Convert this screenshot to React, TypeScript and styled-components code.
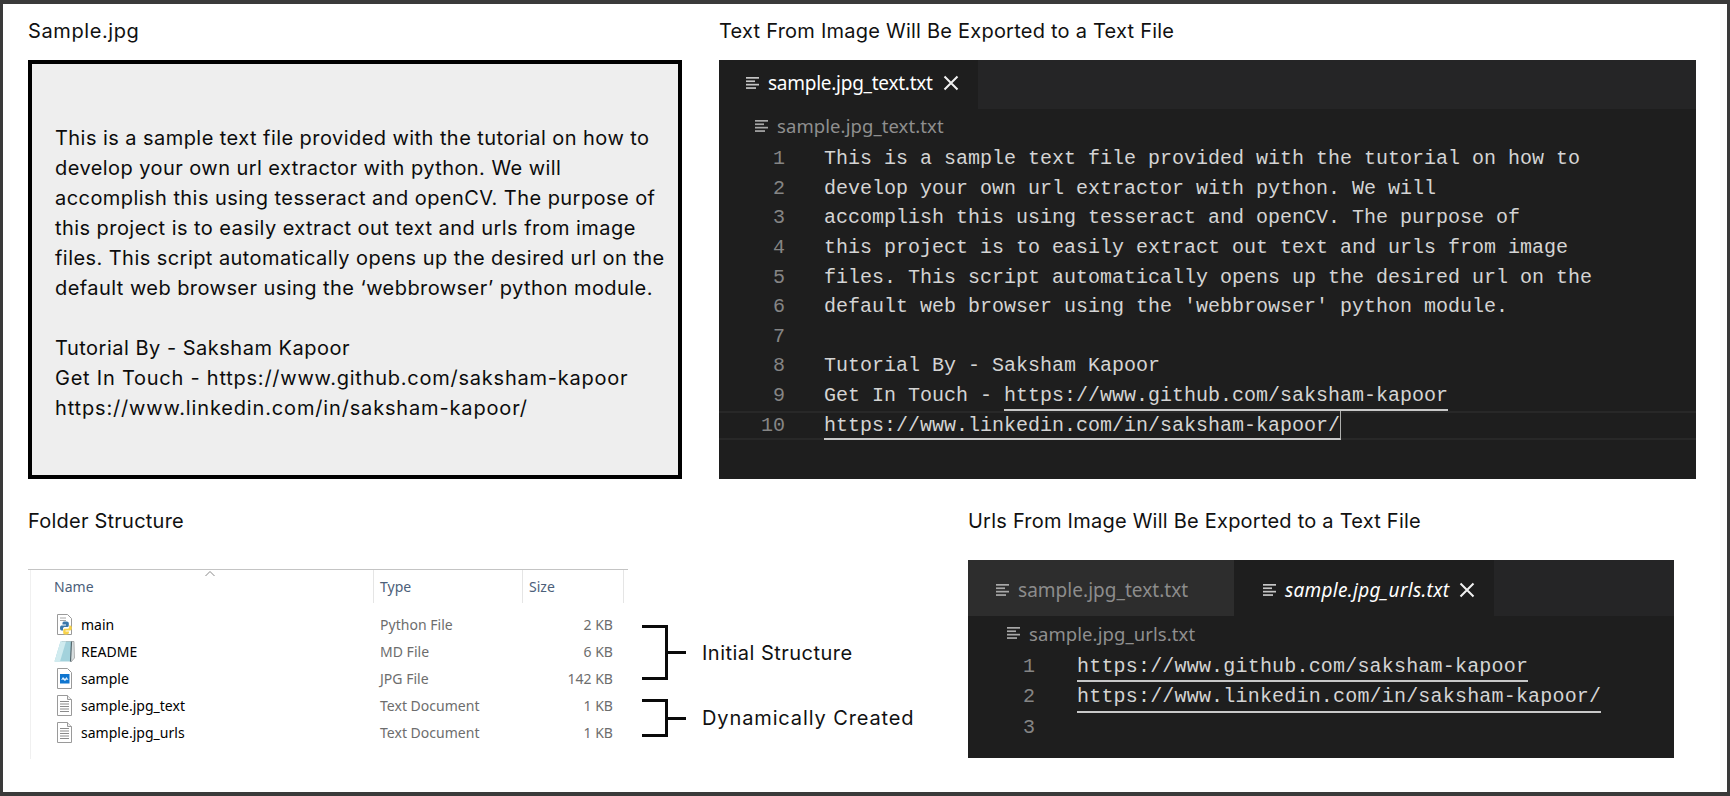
import React from "react";
import styled, { createGlobalStyle } from "styled-components";

const Global = createGlobalStyle`
  html, body { margin: 0; padding: 0; background: #fff; }
  * { box-sizing: border-box; }
`;

const Frame = styled.div`
  width: 1730px;
  height: 796px;
  border: solid #3a3a3a;
  border-width: 4px 3px;
  padding-left: 25px;
  background: #fff;
  font-family: Inter, "Liberation Sans", sans-serif;
  color: #111;
  overflow: hidden;
`;
const Row = styled.div<{ $top: number }>`
  display: flex;
  margin-top: ${(p) => p.$top}px;
`;
const Section = styled.section<{ $w: number; $left?: number }>`
  width: ${(p) => p.$w}px;
  margin-left: ${(p) => p.$left ?? 0}px;
  flex: none;
`;
const Title = styled.h2<{ $gap: number; $sp?: number }>`
  margin: 0 0 ${(p) => p.$gap}px;
  height: 26px;
  font-size: 20px;
  line-height: 26px;
  font-weight: 400;
  letter-spacing: ${(p) => p.$sp ?? 0.23}px;
  white-space: nowrap;
`;
const SampleBox = styled.div`
  height: 419px;
  border: 4px solid #000;
  background: #eeeeee;
  padding: 59px 0 0 23px;
  font-size: 20px;
  line-height: 30px;
  color: #0c0c0c;
  white-space: nowrap;
`;
const TextLine = styled.div<{ $sp: number }>`
  height: 30px;
  letter-spacing: ${(p) => p.$sp}px;
`;

/* editor */
const Editor = styled.div<{ $h: number }>`
  height: ${(p) => p.$h}px;
  background: #1e1e1e;
  color: #d4d4d4;
  overflow: hidden;
`;
const TabBar = styled.div<{ $h: number }>`
  display: flex;
  height: ${(p) => p.$h}px;
  background: #252526;
`;
const Tab = styled.div<{ $w: number; $pl: number; $sp: number; $nudge: number; $active?: boolean; $italic?: boolean }>`
  display: flex;
  align-items: center;
  width: ${(p) => p.$w}px;
  padding-left: ${(p) => p.$pl}px;
  padding-top: ${(p) => Math.max(p.$nudge, 0)}px;
  padding-bottom: ${(p) => Math.max(-p.$nudge, 0)}px;
  background: ${(p) => (p.$active ? "#1e1e1e" : "#2d2d2d")};
  color: ${(p) => (p.$active ? "#ffffff" : "#8c8c8c")};
  font-family: "Noto Sans", "Open Sans", sans-serif;
  font-style: ${(p) => (p.$italic ? "italic" : "normal")};
  font-size: 19px;
  letter-spacing: ${(p) => p.$sp}px;
`;
const TabName = styled.span`
  margin-left: 7px;
  white-space: nowrap;
`;
const Crumb = styled.div<{ $h: number; $pl: number }>`
  display: flex;
  align-items: center;
  height: ${(p) => p.$h}px;
  padding-left: ${(p) => p.$pl}px;
  padding-bottom: 2px;
  color: #8f8f8f;
  font-family: "Noto Sans", "Open Sans", sans-serif;
  font-size: 18.5px;
  letter-spacing: 0.08px;
`;
const CodeLine = styled.div<{ $lh: number; $active?: boolean }>`
  display: flex;
  height: ${(p) => p.$lh}px;
  line-height: ${(p) => p.$lh}px;
  font-family: "Liberation Mono", "DejaVu Sans Mono", monospace;
  font-size: 20px;
  white-space: pre;
  ${(p) => (p.$active ? "box-shadow: inset 0 2px #282828, inset 0 -2px #282828;" : "")}
`;
const Gutter = styled.span<{ $w: number; $mr: number }>`
  flex: none;
  width: ${(p) => p.$w}px;
  margin-right: ${(p) => p.$mr}px;
  text-align: right;
  color: #858585;
`;
const Code = styled.span<{ $sp?: number }>`
  letter-spacing: ${(p) => p.$sp ?? 0}px;
`;
const Link = styled.span<{ $cursor?: boolean }>`
  display: inline-block;
  height: 100%;
  border-bottom: 2px solid #c8c8c8;
  ${(p) => (p.$cursor ? "border-right: 1px solid #aeafad;" : "")}
`;

/* explorer */
const Explorer = styled.div`
  width: 600px;
  height: 190px;
  flex: none;
  border-top: 1.5px solid #c4c4c4;
  position: relative;
  font-family: "Noto Sans", "Open Sans", sans-serif;
  font-size: 14px;
  letter-spacing: 0.02px;
`;
const ExplorerInner = styled.div`
  margin-left: 2px;
  height: 100%;
  border-left: 1px solid #f0f0f0;
`;
const Caret = styled.svg`
  position: absolute;
  left: 176px;
  top: 0;
`;
const Head = styled.div`
  display: grid;
  grid-template-columns: 343px 149px 101px;
  height: 32px;
  color: #4c607a;
  line-height: 33px;
`;
const HeadCell = styled.div<{ $pl: number }>`
  padding-left: ${(p) => p.$pl}px;
  border-right: 1px solid #e5e5e5;
`;
const FileList = styled.div`
  padding-top: 9px;
`;
const FileRow = styled.div`
  display: grid;
  grid-template-columns: 343px 149px 90px;
  align-items: center;
  height: 27px;
`;
const NameCell = styled.div`
  display: flex;
  align-items: center;
  padding-left: 23px;
  color: #000;
`;
const FileName = styled.span`
  margin-left: 5px;
`;
const IconBox = styled.span`
  display: flex;
  justify-content: center;
  width: 22px;
`;
const TypeCell = styled.div`
  padding-left: 6px;
  color: #6d6d6d;
`;
const SizeCell = styled.div`
  text-align: right;
  color: #6d6d6d;
`;

const Groups = styled.div`
  margin: 56px 0 0 14px;
  display: flex;
  flex-direction: column;
  gap: 19px;
`;
const Group = styled.div`
  display: flex;
  align-items: center;
`;
const Bracket = styled.div<{ $h: number }>`
  width: 26px;
  height: ${(p) => p.$h}px;
  border: 3px solid #0a0a0a;
  border-left: 0;
`;
const Tick = styled.div`
  width: 18px;
  height: 3px;
  background: #0a0a0a;
`;
const GroupLabel = styled.span<{ $sp: number }>`
  margin-left: 16px;
  font-size: 20px;
  letter-spacing: ${(p) => p.$sp}px;
  white-space: nowrap;
`;

const ListIcon = ({ c = "#c5c5c5" }: { c?: string }) => (
  <svg width="16" height="16" viewBox="0 0 16 16" fill={c}>
    <rect x="1" y="2" width="13" height="1.7" />
    <rect x="1" y="5.4" width="9" height="1.7" />
    <rect x="1" y="8.8" width="13" height="1.7" />
    <rect x="1" y="12.2" width="10" height="1.7" />
  </svg>
);
const CloseIcon = styled.svg`
  margin-left: 10px;
`;
const Close = () => (
  <CloseIcon width="16" height="16" viewBox="0 0 16 16" stroke="#f0f0f0" strokeWidth="2" fill="none">
    <path d="M1.5 1.5 L14.5 14.5 M14.5 1.5 L1.5 14.5" />
  </CloseIcon>
);

const PageBase = () => (
  <path d="M3.5 1.5 H13.5 L17.5 5.5 V21.5 H3.5 Z" fill="#fff" stroke="#9a9a9a" strokeWidth="1" />
);
const TxtIcon = () => (
  <svg width="22" height="23" viewBox="0 0 22 23">
    <PageBase />
    <path d="M13.5 1.5 V5.5 H17.5" fill="#eee" stroke="#9a9a9a" />
    <path d="M6 7.5H15M6 10H15M6 12.5H15M6 15H15M6 17.5H15" stroke="#8b8b8b" strokeWidth="1" />
  </svg>
);
const PyIcon = () => (
  <svg width="22" height="23" viewBox="0 0 22 23">
    <PageBase />
    <path d="M6 5H12M6 7.5H12" stroke="#a8a8a8" />
    <path d="M11 8.5 C8 8.5 8.5 10 8.5 11.5 H12 V12.5 H7.5 C5.5 12.5 5.5 17.5 7.5 17.5 H9 V15.5 C9 14.5 10 14 11 14 H13.5 C14.5 14 14.8 13 14.8 12 V10 C14.8 8.8 13 8.5 11 8.5 Z" fill="#3b78ab" />
    <path d="M12 21.5 C15 21.5 15 20 15 18.5 H11.5 V17.6 H16 C18.5 17.6 18.5 12.6 16 12.6 H15.2 V14.2 C15.2 15.2 14 15.8 13 15.8 H10.5 C9.5 15.8 9.2 16.8 9.2 18 V20 C9.2 21 10.5 21.5 12 21.5 Z" fill="#f7d24a" />
  </svg>
);
const NoteIcon = () => (
  <svg width="22" height="23" viewBox="0 0 22 23">
    <path d="M8 1.5 H20 L20.5 18 L17 22 Z" fill="#d9dfe0" stroke="#8a8a8a" strokeWidth="0.6" />
    <path d="M6.5 1.5 H17.5 L16.5 21.5 H0.5 Z" fill="#a3d2dc" />
    <path d="M6.5 1.5 H12 L6 21.5 H0.5 Z" fill="#d0ebef" />
    <path d="M17.5 1.5 L16.5 21.5" stroke="#55666c" strokeWidth="1.2" />
  </svg>
);
const JpgIcon = () => (
  <svg width="22" height="23" viewBox="0 0 22 23">
    <PageBase />
    <rect x="6" y="7" width="9.5" height="9.5" fill="#0f75cf" />
    <path d="M7 13 L9 10 L11 12 L12.5 10 L14.5 13 L12.5 12.5 L11 14 L9 12.5 Z" fill="#dff0ff" />
  </svg>
);

const files = [
  { name: "main", type: "Python File", size: "2 KB", icon: <PyIcon /> },
  { name: "README", type: "MD File", size: "6 KB", icon: <NoteIcon /> },
  { name: "sample", type: "JPG File", size: "142 KB", icon: <JpgIcon /> },
  { name: "sample.jpg_text", type: "Text Document", size: "1 KB", icon: <TxtIcon /> },
  { name: "sample.jpg_urls", type: "Text Document", size: "1 KB", icon: <TxtIcon /> },
];

const sampleLines = [
  { t: "This is a sample text file provided with the tutorial on how to", sp: 0.44 },
  { t: "develop your own url extractor with python. We will", sp: 0.44 },
  { t: "accomplish this using tesseract and openCV. The purpose of", sp: 0.44 },
  { t: "this project is to easily extract out text and urls from image", sp: 0.44 },
  { t: "files. This script automatically opens up the desired url on the", sp: 0.44 },
  { t: "default web browser using the \u2018webbrowser\u2019 python module.", sp: 0.44 },
  { t: "", sp: 0 },
  { t: "Tutorial By - Saksham Kapoor", sp: 0.5 },
  { t: "Get In Touch - https://www.github.com/saksham-kapoor", sp: 0.76 },
  { t: "https://www.linkedin.com/in/saksham-kapoor/", sp: 0.84 },
];

const codeLines = [
  "This is a sample text file provided with the tutorial on how to",
  "develop your own url extractor with python. We will",
  "accomplish this using tesseract and openCV. The purpose of",
  "this project is to easily extract out text and urls from image",
  "files. This script automatically opens up the desired url on the",
  "default web browser using the 'webbrowser' python module.",
  "",
  "Tutorial By - Saksham Kapoor",
];

export default function App() {
  return (
    <Frame>
      <Global />
      <Row $top={14}>
        <Section $w={654}>
          <Title $gap={16} $sp={0.6}>Sample.jpg</Title>
          <SampleBox>
            {sampleLines.map((l, i) => (
              <TextLine key={i} $sp={l.sp}>{l.t}</TextLine>
            ))}
          </SampleBox>
        </Section>
        <Section $w={977} $left={37}>
          <Title $gap={16}>Text From Image Will Be Exported to a Text File</Title>
          <Editor $h={419}>
            <TabBar $h={49}>
              <Tab $w={259} $pl={26} $sp={-0.26} $nudge={-3} $active>
                <ListIcon />
                <TabName>sample.jpg_text.txt</TabName>
                <Close />
              </Tab>
            </TabBar>
            <Crumb $h={35} $pl={35}>
              <ListIcon c="#a8a8a8" />
              <TabName>sample.jpg_text.txt</TabName>
            </Crumb>
            {codeLines.map((l, i) => (
              <CodeLine key={i} $lh={29.65}>
                <Gutter $w={66} $mr={39}>{i + 1}</Gutter>
                <Code>{l}</Code>
              </CodeLine>
            ))}
            <CodeLine $lh={29.65}>
              <Gutter $w={66} $mr={39}>9</Gutter>
              <Code>Get In Touch - <Link>https://www.github.com/saksham-kapoor</Link></Code>
            </CodeLine>
            <CodeLine $lh={29.65} $active>
              <Gutter $w={66} $mr={39}>10</Gutter>
              <Code><Link $cursor>https://www.linkedin.com/in/saksham-kapoor/</Link></Code>
            </CodeLine>
          </Editor>
        </Section>
      </Row>
      <Row $top={29}>
        <Section $w={940}>
          <Title $gap={35}>Folder Structure</Title>
          <Row $top={0}>
            <Explorer>
              <Caret width="12" height="7" viewBox="0 0 12 7" fill="none" stroke="#8a8a8a">
                <path d="M1.5 6 L6 1.5 L10.5 6" />
              </Caret>
              <ExplorerInner>
                <Head>
                  <HeadCell $pl={23}>Name</HeadCell>
                  <HeadCell $pl={6}>Type</HeadCell>
                  <HeadCell $pl={6}>Size</HeadCell>
                </Head>
                <FileList>
                  {files.map((f) => (
                    <FileRow key={f.name}>
                      <NameCell>
                        <IconBox>{f.icon}</IconBox>
                        <FileName>{f.name}</FileName>
                      </NameCell>
                      <TypeCell>{f.type}</TypeCell>
                      <SizeCell>{f.size}</SizeCell>
                    </FileRow>
                  ))}
                </FileList>
              </ExplorerInner>
            </Explorer>
            <Groups>
              <Group>
                <Bracket $h={55} />
                <Tick />
                <GroupLabel $sp={0.48}>Initial Structure</GroupLabel>
              </Group>
              <Group>
                <Bracket $h={38} />
                <Tick />
                <GroupLabel $sp={0.88}>Dynamically Created</GroupLabel>
              </Group>
            </Groups>
          </Row>
        </Section>
        <Section $w={706}>
          <Title $gap={26}>Urls From Image Will Be Exported to a Text File</Title>
          <Editor $h={198}>
            <TabBar $h={56}>
              <Tab $w={266} $pl={27} $sp={0.03} $nudge={3}>
                <ListIcon c="#a8a8a8" />
                <TabName>sample.jpg_text.txt</TabName>
              </Tab>
              <Tab $w={260} $pl={28} $sp={0.3} $nudge={3} $active $italic>
                <ListIcon />
                <TabName>sample.jpg_urls.txt</TabName>
                <Close />
              </Tab>
            </TabBar>
            <Crumb $h={36} $pl={38}>
              <ListIcon c="#a8a8a8" />
              <TabName>sample.jpg_urls.txt</TabName>
            </Crumb>
            <CodeLine $lh={30.3}>
              <Gutter $w={67} $mr={42}>1</Gutter>
              <Code $sp={0.19}><Link>https://www.github.com/saksham-kapoor</Link></Code>
            </CodeLine>
            <CodeLine $lh={30.3}>
              <Gutter $w={67} $mr={42}>2</Gutter>
              <Code $sp={0.19}><Link>https://www.linkedin.com/in/saksham-kapoor/</Link></Code>
            </CodeLine>
            <CodeLine $lh={30.3}>
              <Gutter $w={67} $mr={42}>3</Gutter>
            </CodeLine>
          </Editor>
        </Section>
      </Row>
    </Frame>
  );
}
